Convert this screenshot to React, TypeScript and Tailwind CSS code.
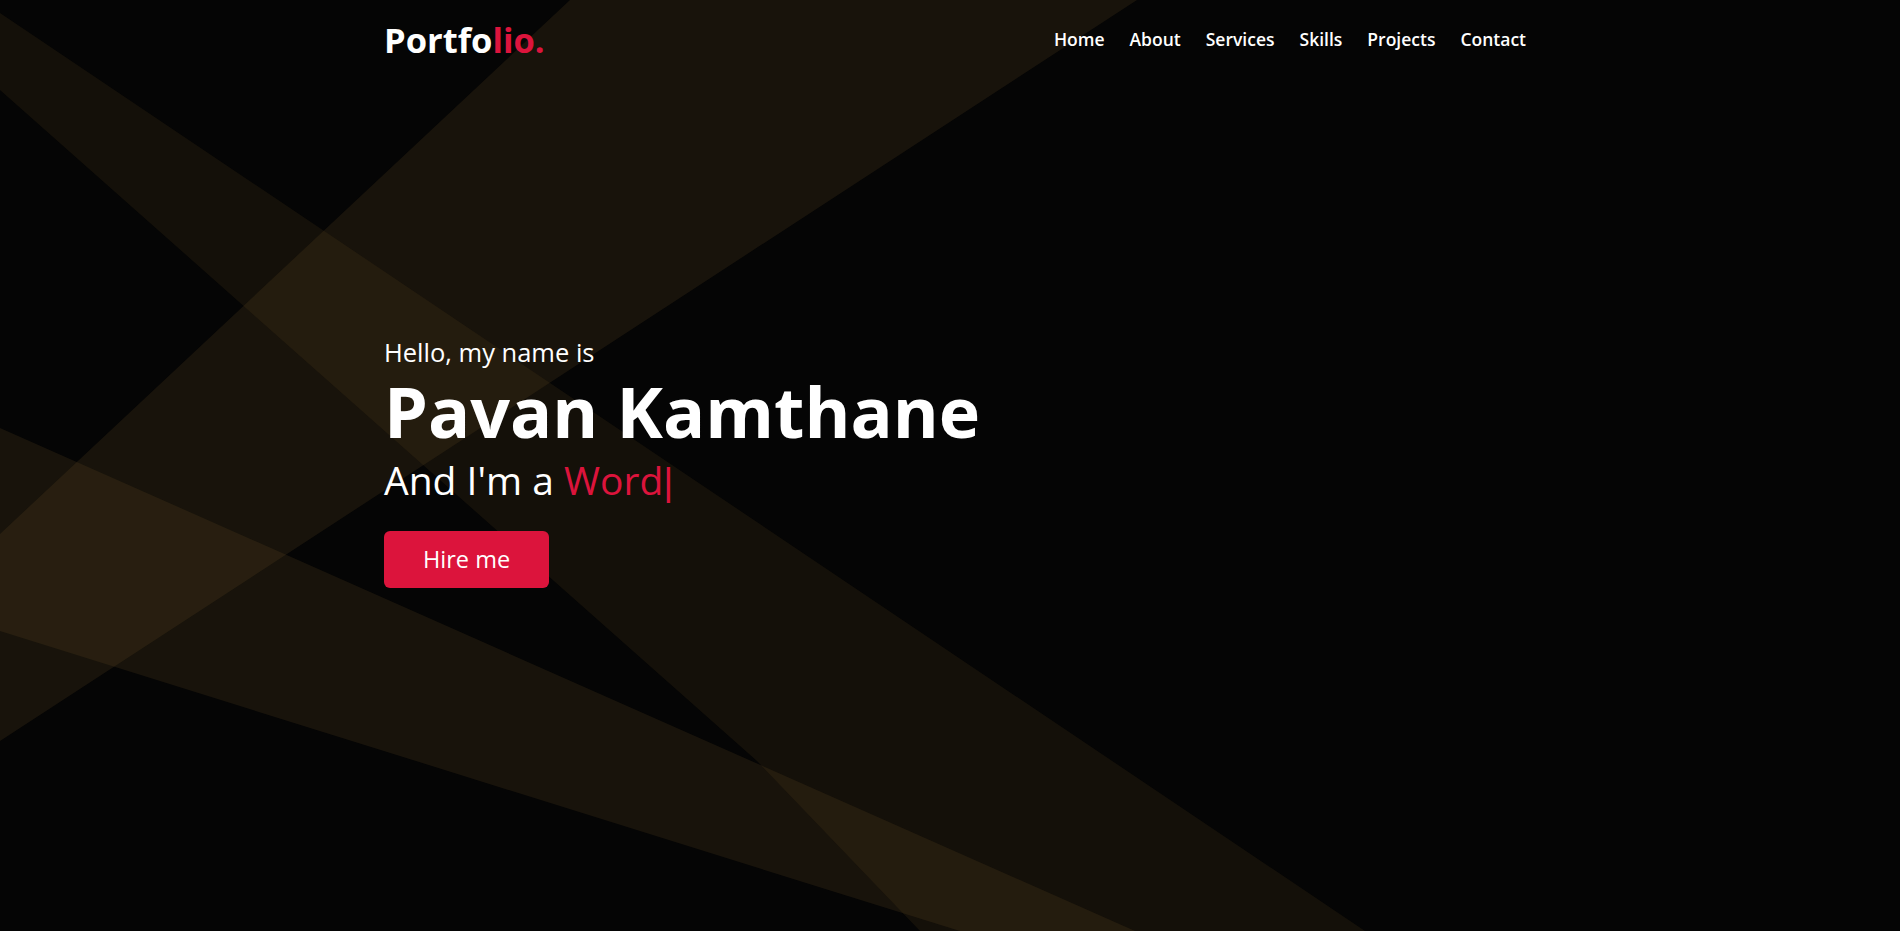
import React from 'react';

const navLinks = ['Home', 'About', 'Services', 'Skills', 'Projects', 'Contact'];

// light beams behind the hero
const Beams = () => (
  <svg
    className="absolute inset-0 h-full w-full"
    viewBox="0 0 1900 931"
    preserveAspectRatio="none"
    aria-hidden="true"
  >
    <polygon points="0,13 1365,931 920,931 757,761 0,90" fill="#7c5c2a" fillOpacity="0.13" />
    <polygon points="570,0 1137,0 0,741 0,534" fill="#7c5c2a" fillOpacity="0.16" />
    <polygon points="0,428 1135,931 960,931 0,631" fill="#7c5c2a" fillOpacity="0.16" />
  </svg>
);

const App: React.FC = () => {
  return (
    <div className="relative h-[931px] w-full overflow-hidden bg-[#050505] font-['Open_Sans',sans-serif] text-white">
      <Beams />
      <nav className="absolute inset-x-0 top-0 z-10">
        <div className="flex h-[80px] items-center justify-between pl-[384px] pr-[374px]">
          <a href="#" className="text-[34.5px] font-bold leading-none">
            Portfo<span className="text-[#dc143c]">lio.</span>
          </a>
          <ul className="flex gap-[25px]">
            {navLinks.map((link) => (
              <li key={link}>
                <a href="#" className="text-[17.5px] font-semibold leading-none">
                  {link}
                </a>
              </li>
            ))}
          </ul>
        </div>
      </nav>
      <section className="relative flex h-full items-center pb-[6px] pl-[384px]">
        <div>
          <p className="text-[25.5px] leading-[30px]">Hello, my name is</p>
          <h1 className="mt-[4px] text-[70px] font-bold leading-[80px]">Pavan Kamthane</h1>
          <p className="mt-[6px] text-[39px] leading-[46px]">
            And I'm a <span className="text-[#dc143c]">Word</span>
            <span className="font-['Liberation_Sans',sans-serif] text-[#dc143c]">|</span>
          </p>
          <a
            href="#"
            className="mt-[26px] block w-fit rounded-[6px] bg-[#dc143c] px-[39px] py-[13px] text-[23.5px] leading-[31px]"
          >
            Hire me
          </a>
        </div>
      </section>
    </div>
  );
};

export default App;
